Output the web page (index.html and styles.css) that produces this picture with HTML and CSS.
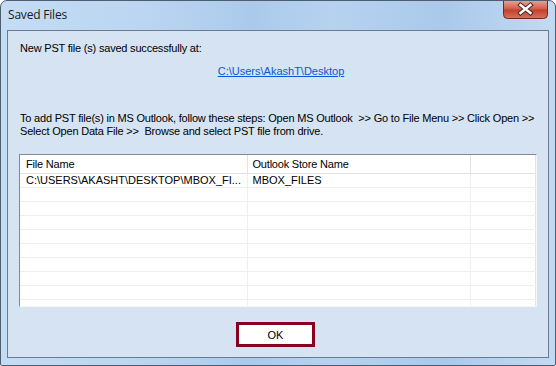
FILE: index.html
```html
<!DOCTYPE html>
<html lang="en">
<head>
    <meta charset="UTF-8">
    <title>Saved Files</title>
    <link rel="stylesheet" href="styles.css">
</head>
<body>
    <div class="window">
        <div class="titlebar">
            <span class="title">Saved Files</span>
            <button class="close" type="button" aria-label="Close">
                <svg width="45" height="19" viewBox="0 0 45 19">
                    <defs>
                        <linearGradient id="closeGrad" x1="0" y1="0" x2="0" y2="1">
                            <stop offset="0" stop-color="#e9a899"/>
                            <stop offset="0.45" stop-color="#d2634f"/>
                            <stop offset="0.55" stop-color="#c2412c"/>
                            <stop offset="1" stop-color="#d9735c"/>
                        </linearGradient>
                    </defs>
                    <path d="M0.5 0 V14.5 Q0.5 18.5 4.5 18.5 H40.5 Q44.5 18.5 44.5 14.5 V0" fill="url(#closeGrad)" stroke="#6e2a22"/>
                    <path d="M17.5 5 L27.5 13 M27.5 5 L17.5 13" stroke="#3b2b2b" stroke-width="4.4" stroke-linecap="square"/>
                    <path d="M17.5 5 L27.5 13 M27.5 5 L17.5 13" stroke="#ffffff" stroke-width="2.4" stroke-linecap="square"/>
                </svg>
            </button>
        </div>

        <div class="client">
            <p class="saved-msg">New PST file (s) saved successfully at:</p>
            <p class="path"><a href="#">C:\Users\AkashT\Desktop</a></p>
            <p class="steps">
                To add PST file(s) in MS Outlook, follow these steps: Open MS Outlook &nbsp;&gt;&gt; Go to File Menu &gt;&gt; Click Open &gt;&gt;<br>
                Select Open Data File &gt;&gt; &nbsp;Browse and select PST file from drive.
            </p>

            <div class="list">
                <table>
                    <colgroup>
                        <col class="col-file">
                        <col class="col-store">
                        <col>
                    </colgroup>
                    <thead>
                        <tr>
                            <th>File Name</th>
                            <th>Outlook Store Name</th>
                            <th></th>
                        </tr>
                    </thead>
                    <tbody>
                        <tr><td>C:\USERS\AKASHT\DESKTOP\MBOX_FI...</td><td>MBOX_FILES</td><td></td></tr>
                        <tr><td></td><td></td><td></td></tr>
                        <tr><td></td><td></td><td></td></tr>
                        <tr><td></td><td></td><td></td></tr>
                        <tr><td></td><td></td><td></td></tr>
                        <tr><td></td><td></td><td></td></tr>
                        <tr><td></td><td></td><td></td></tr>
                        <tr><td></td><td></td><td></td></tr>
                        <tr><td></td><td></td><td></td></tr>
                        <tr><td></td><td></td><td></td></tr>
                    </tbody>
                </table>
            </div>

            <div class="actions">
                <button class="ok" type="button">OK</button>
            </div>
        </div>
    </div>
</body>
</html>
```

FILE: styles.css
```css
/* Global styles */
body {
    margin: 0;
    padding: 0;
    font-family: "Liberation Sans", Arial, sans-serif;
    font-size: 11px;
    color: #000;
    background-color: #ffffff;
}

/* Window frame */
.window {
    width: 556px;
    height: 366px;
    box-sizing: border-box;
    border: 1px solid #4e5d70;
    border-radius: 7px 7px 2px 2px;
    padding: 0 6px 7px 6px;
    overflow: hidden;
    background: linear-gradient(90deg, #c4dcf4 0%, #bcd6f1 25%, #abcaeb 45%, #b6d2ef 60%, #aac9ea 80%, #c3daf3 100%);
}

.titlebar {
    height: 29px;
    display: flex;
    justify-content: space-between;
    align-items: flex-start;
}

.title {
    font-family: "Open Sans", "Noto Sans", sans-serif;
    font-size: 12px;
    line-height: 16px;
    padding: 6px 0 0 1px;
    letter-spacing: -0.2px;
    color: #1a1a1a;
}

.close {
    margin: -1px 1px 0 0;
    padding: 0;
    border: none;
    background: none;
    width: 45px;
    height: 19px;
    display: block;
}

.close svg {
    display: block;
}

/* Client area */
.client {
    height: 328px;
    box-sizing: border-box;
    border: 1px solid #6a7c92;
    background-color: #d5e3f2;
    padding: 0 11px;
}

.client p {
    margin: 0;
    line-height: 13px;
    letter-spacing: -0.2px;
}

.saved-msg {
    padding-top: 11px;
    padding-left: 1px;
}

.client .path {
    margin-top: 10px;
    padding-left: 6px;
    text-align: center;
    letter-spacing: 0;
}

.path a {
    color: #0a56d6;
    text-decoration: underline;
}

.client .steps {
    margin-top: 34px;
    padding-left: 1px;
    white-space: nowrap;
}

/* File list */
.list {
    margin-top: 16px;
    height: 153px;
    box-sizing: border-box;
    border: 1px solid #f4f6f8;
    border-top-color: #7f8a96;
    border-left-color: #7f8a96;
    background-color: #ffffff;
    overflow: hidden;
}

table {
    width: 100%;
    border-collapse: collapse;
    table-layout: fixed;
}

.col-file {
    width: 227px;
}

.col-store {
    width: 223px;
}

th, td {
    padding: 0 0 0 5px;
    text-align: left;
    white-space: nowrap;
    overflow: hidden;
}

th {
    font-weight: normal;
    height: 18px;
    letter-spacing: -0.2px;
    border-right: 1px solid #e3e3e3;
    border-bottom: 1px solid #e3e3e3;
}

td {
    height: 13px;
    line-height: 13px;
    border-right: 1px solid #efefef;
    border-bottom: 1px solid #efefef;
}

th:first-child, td:first-child {
    padding-left: 6px;
}

th:last-child, td:last-child {
    border-right-color: #e3e3e3;
}

/* Buttons */
.actions {
    margin-top: 15px;
    display: flex;
    justify-content: center;
    padding-right: 5px;
}

.ok {
    width: 79px;
    height: 25px;
    box-sizing: border-box;
    border: 3px solid #8a0020;
    background-color: #ffffff;
    font-family: "Liberation Sans", Arial, sans-serif;
    font-size: 11px;
    font-weight: normal;
    color: #000;
    padding: 0;
    cursor: pointer;
}
```
